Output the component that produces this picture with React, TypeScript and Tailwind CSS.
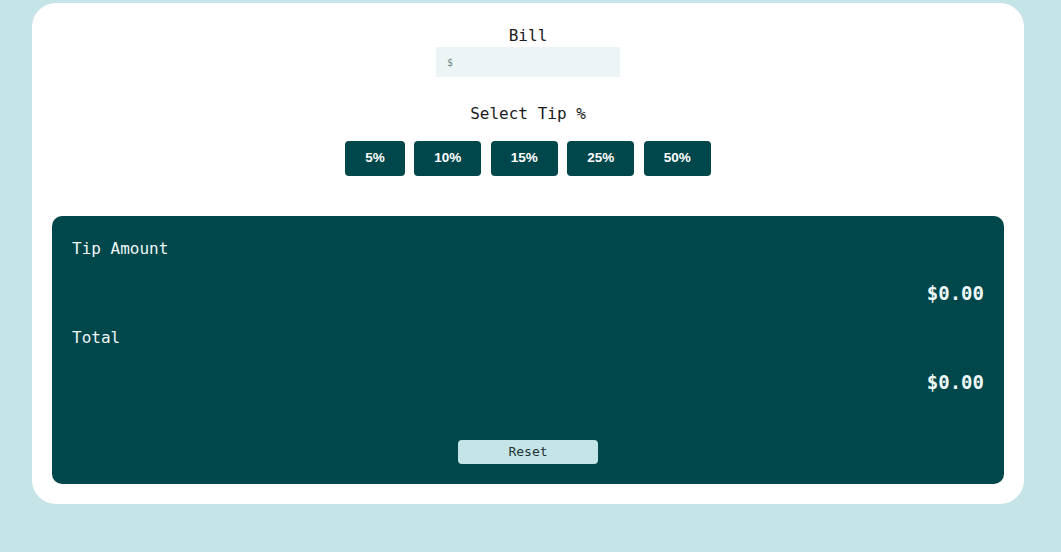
import React from "react";

const mono = { fontFamily: '"DejaVu Sans Mono", "Liberation Mono", monospace' };

export default function App() {
  const tips = ["5%", "10%", "15%", "25%", "50%"];
  return (
    <div className="min-h-[552px] w-full bg-[#c5e4e7] pt-[3px]" style={mono}>
      <div className="ml-[32px] flex w-[992px] flex-col items-center rounded-[24px] bg-white px-5 pt-5 pb-5">
        <label className="h-6 pt-px text-[16px] leading-6 text-[#1b1b1b]">Bill</label>
        <div className="flex h-[30px] w-[184px] items-center bg-[#ecf4f5] pl-[11px] text-[10px] text-[#6f8789]">
          $
        </div>
        <div className="mt-6 h-6 pt-px text-[16px] leading-6 text-[#1b1b1b]">Select Tip %</div>
        <div className="mt-4 flex gap-[9.5px]">
          {tips.map((t) => (
            <button
              key={t}
              className="h-[35px] rounded-[4px] bg-[#00474b] px-5 text-[13.5px] font-bold text-white"
              style={{ fontFamily: '"Liberation Sans", Arial, sans-serif' }}
            >
              {t}
            </button>
          ))}
        </div>
        <div className="mt-10 flex w-full flex-col rounded-[10px] bg-[#00474b] px-5 pt-5 pb-5 text-[#eef7f7]">
          <div className="h-6 pt-px text-[16px] leading-6">Tip Amount</div>
          <div className="mt-[19px] h-[29px] text-right text-[19px] font-bold leading-[29px]">$0.00</div>
          <div className="mt-[17px] h-6 pt-px text-[16px] leading-6">Total</div>
          <div className="mt-[18px] h-[29px] pt-px text-right text-[19px] font-bold leading-[29px]">$0.00</div>
          <div className="mt-[44px] flex justify-center">
            <button className="h-6 w-[140px] rounded-[4px] bg-[#c5e4e7] text-[13px] text-[#1f3436]" style={mono}>
              Reset
            </button>
          </div>
        </div>
      </div>
    </div>
  );
}
